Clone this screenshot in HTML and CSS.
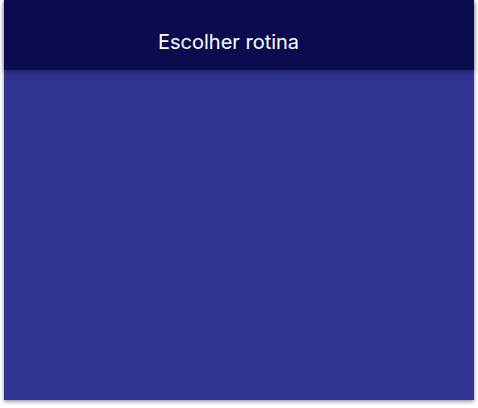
FILE: index.html
```html
<!DOCTYPE html>
<html lang="pt">
<head>
<meta charset="utf-8">
<link rel="stylesheet" href="styles.css">
</head>
<body>
<div class="card">
  <header class="bar"><h1 class="title">Escolher rotina</h1></header>
  <main class="content"></main>
</div>
</body>
</html>
```
FILE: styles.css
```css
html, body { margin: 0; padding: 0; background: #ffffff; }
body { padding: 0 4px 8px 4px; font-family: Inter, "Noto Sans", sans-serif; }
.card {
  width: 470px;
  height: 400px;
  display: flex;
  flex-direction: column;
  background: #303391;
  box-shadow: 0 2px 4px rgba(0,0,0,0.35), 0 0 3px rgba(0,0,0,0.15);
}
.bar {
  height: 70px;
  flex: none;
  background: #0a0c4f;
  display: flex;
  align-items: center;
  padding-left: 154px;
  box-shadow: 0 2px 5px rgba(0,0,0,0.3);
  position: relative;
  z-index: 1;
}
.title {
  margin: 0;
  color: #ffffff;
  font-size: 20px;
  font-weight: 400;
  line-height: 24px;
  padding-top: 14px;
}
.content { flex: 1; }
```
